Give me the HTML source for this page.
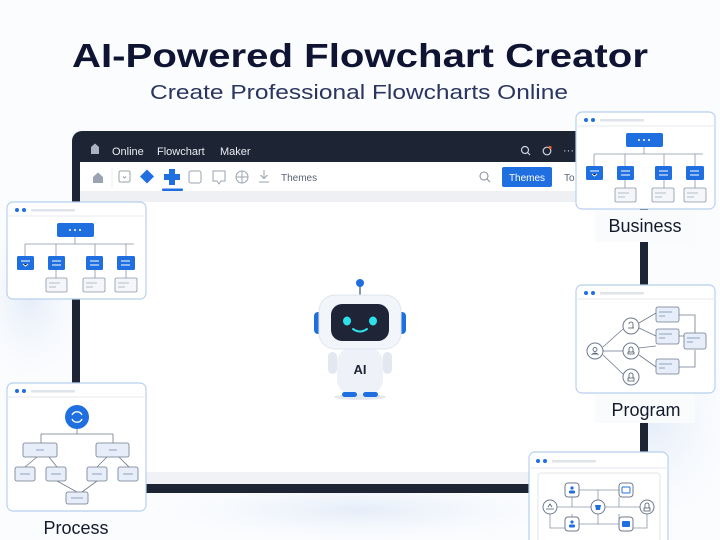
<!DOCTYPE html>
<html><head><meta charset="utf-8"><style>
html,body{margin:0;padding:0;width:720px;height:540px;overflow:hidden;background:#fff}
svg{display:block}
text{font-family:"Liberation Sans",sans-serif}
</style></head><body>
<svg width="720" height="540" viewBox="0 0 720 540" xmlns="http://www.w3.org/2000/svg">
<defs>
<radialGradient id="g1" cx="0.5" cy="0.5" r="0.5"><stop offset="0" stop-color="#e4edf9"/><stop offset="1" stop-color="#fff" stop-opacity="0"/></radialGradient>
<g id="biz">
 <rect x="0" y="0" width="139" height="97" rx="6" fill="#fff" stroke="#b7d0ee" stroke-width="1.2"/>
 <circle cx="10" cy="8" r="2" fill="#1f6fe0"/><circle cx="17" cy="8" r="2" fill="#1f6fe0"/>
 <rect x="24" y="7" width="44" height="2.5" rx="1" fill="#dfe3ea"/>
 <line x1="0" y1="14" x2="139" y2="14" stroke="#e6e9ef"/>
 <rect x="50" y="21" width="37" height="14" rx="2" fill="#1f6fe0"/>
 <circle cx="63" cy="28" r="1" fill="#fff"/><circle cx="68" cy="28" r="1" fill="#fff"/><circle cx="73" cy="28" r="1" fill="#fff"/>
 <path d="M68 35V42M18 42H127M18 42V54M49 42V54M88 42V54M119 42V54M49 68V76M88 68V76M119 68V76" stroke="#8a96a8" stroke-width="0.8" fill="none"/>
 <rect x="10" y="54" width="17" height="14" rx="1.5" fill="#1f6fe0"/>
 <rect x="41" y="54" width="17" height="14" rx="1.5" fill="#1f6fe0"/>
 <rect x="79" y="54" width="17" height="14" rx="1.5" fill="#1f6fe0"/>
 <rect x="110" y="54" width="18" height="14" rx="1.5" fill="#1f6fe0"/>
 <path d="M14 59H23M16 62L18.5 64L21 62M45 59H54M45 63H54M83 59H92M83 63H92M114 59H123M114 63H123" stroke="#fff" stroke-width="1"/>
 <rect x="39" y="76" width="21" height="14" rx="1.5" fill="#f4f6f9" stroke="#8a96a8" stroke-width="0.8"/>
 <rect x="76" y="76" width="22" height="14" rx="1.5" fill="#f4f6f9" stroke="#8a96a8" stroke-width="0.8"/>
 <rect x="108" y="76" width="22" height="14" rx="1.5" fill="#f4f6f9" stroke="#8a96a8" stroke-width="0.8"/>
 <path d="M42 81H53M42 85H49M79 81H90M79 85H86M111 81H122M111 85H118" stroke="#b5bfcc" stroke-width="1"/>
</g>
</defs>
<rect width="720" height="540" fill="#fbfcfe"/>
<ellipse cx="30" cy="300" rx="70" ry="100" fill="url(#g1)"/>
<ellipse cx="650" cy="420" rx="110" ry="130" fill="url(#g1)"/>
<ellipse cx="360" cy="510" rx="260" ry="40" fill="url(#g1)"/>

<text x="72" y="67" font-size="33" font-weight="bold" fill="#0f1433" textLength="576" lengthAdjust="spacingAndGlyphs">AI-Powered Flowchart Creator</text>
<text x="150" y="99" font-size="20.5" fill="#2a3560" textLength="418" lengthAdjust="spacingAndGlyphs">Create Professional Flowcharts Online</text>

<rect x="72" y="131" width="576" height="362" rx="10" fill="#1d2434"/>
<rect x="80" y="162" width="560" height="322" fill="#fff"/>
<rect x="80" y="191" width="560" height="11" fill="#eef0f4"/>
<rect x="80" y="472" width="560" height="12" fill="#f0f2f6"/>
<path d="M91 147L95 143.5L99 147V154H91Z" fill="#aab3c2"/>
<text x="112" y="155" font-size="11" fill="#e8ecf2">Online</text>
<text x="157" y="155" font-size="11" fill="#e8ecf2">Flowchart</text>
<text x="220" y="155" font-size="11" fill="#e8ecf2">Maker</text>
<circle cx="525" cy="150" r="3.5" fill="none" stroke="#cfd5de" stroke-width="1.2"/><line x1="527.5" y1="152.5" x2="530" y2="155" stroke="#cfd5de" stroke-width="1.2"/>
<circle cx="547" cy="151" r="3.8" fill="none" stroke="#cfd5de" stroke-width="1.2"/><circle cx="550" cy="147.5" r="1.6" fill="#f0623a"/>
<text x="563" y="154" font-size="11" fill="#cfd5de">···</text>
<path d="M93 177L98 172.5L103 177V183H93Z" fill="#9aa3b1"/>
<line x1="112" y1="168" x2="112" y2="188" stroke="#eceff3"/>
<rect x="119" y="171" width="11" height="11" rx="1.5" fill="none" stroke="#9aa3b1"/><path d="M123 176.5L124.5 178L126 176.5" stroke="#9aa3b1" fill="none"/>
<path d="M147 169.5L154 176.5L147 183.5L140 176.5Z" fill="#1f6fe0"/>
<path d="M169 169H175V174H180V180H175V185H169V180H164V174H169Z" fill="#1f6fe0"/>
<rect x="162" y="188.5" width="21" height="2.5" rx="1" fill="#1f6fe0"/>
<rect x="189" y="171" width="12" height="12" rx="2" fill="none" stroke="#9aa3b1"/>
<path d="M213 171H225V181H221L219 184L217 181H213Z" fill="none" stroke="#9aa3b1" stroke-linejoin="round"/>
<circle cx="242" cy="177" r="6" fill="none" stroke="#9aa3b1"/><path d="M236 177H248M242 171V183" stroke="#9aa3b1"/>
<path d="M264 170V178M260.5 175L264 178.5L267.5 175M259 182H269" stroke="#9aa3b1" fill="none"/>
<text x="281" y="181" font-size="10" fill="#5a6475">Themes</text>
<circle cx="484" cy="176" r="4" fill="none" stroke="#8a93a2" stroke-width="1.1"/><line x1="487" y1="179" x2="490" y2="182" stroke="#8a93a2" stroke-width="1.1"/>
<rect x="502" y="167" width="50" height="20" rx="2" fill="#1f6fe0"/>
<text x="527" y="181" font-size="10" fill="#fff" text-anchor="middle">Themes</text>
<text x="564" y="181" font-size="10" fill="#5a6475">To</text>

<ellipse cx="360" cy="397" rx="26" ry="3" fill="#e4e9f0"/>
<line x1="360" y1="284" x2="360" y2="296" stroke="#8a96a8" stroke-width="2"/>
<circle cx="360" cy="283" r="4" fill="#1f6fe0"/>
<rect x="314" y="312" width="8" height="22" rx="4" fill="#1f6fe0"/>
<rect x="398" y="312" width="8" height="22" rx="4" fill="#1f6fe0"/>
<rect x="337" y="348" width="46" height="46" rx="14" fill="#eef2f8"/>
<rect x="328" y="352" width="9" height="22" rx="4.5" fill="#e3e8f0"/>
<rect x="383" y="352" width="9" height="22" rx="4.5" fill="#e3e8f0"/>
<text x="360" y="374" font-size="13" font-weight="bold" fill="#1d2434" text-anchor="middle">AI</text>
<rect x="342" y="392" width="15" height="5" rx="2.5" fill="#1f6fe0"/>
<rect x="363" y="392" width="15" height="5" rx="2.5" fill="#1f6fe0"/>
<rect x="319" y="295" width="82" height="54" rx="16" fill="#f2f5fa" stroke="#dfe5ee"/>
<rect x="331" y="304" width="58" height="37" rx="11" fill="#1f2536"/>
<ellipse cx="347" cy="321" rx="4" ry="4.5" fill="#2ee0e8"/>
<ellipse cx="373" cy="321" rx="4" ry="4.5" fill="#2ee0e8"/>
<path d="M353 329Q360 334 367 329" stroke="#2ee0e8" stroke-width="2" fill="none" stroke-linecap="round"/>

<rect x="595" y="210" width="100" height="32" fill="#fafbfd"/>
<rect x="595" y="393" width="100" height="30" fill="#fafbfd"/>

<use href="#biz" x="576" y="112"/>
<use href="#biz" x="7" y="202"/>
<text x="645" y="232" font-size="18" fill="#141a2e" text-anchor="middle">Business</text>

<g transform="translate(576,285)">
 <rect x="0" y="0" width="139" height="108" rx="6" fill="#fff" stroke="#b7d0ee" stroke-width="1.2"/>
 <circle cx="10" cy="8" r="2" fill="#1f6fe0"/><circle cx="17" cy="8" r="2" fill="#1f6fe0"/>
 <rect x="24" y="7" width="44" height="2.5" rx="1" fill="#dfe3ea"/>
 <line x1="0" y1="14" x2="139" y2="14" stroke="#e6e9ef"/>
 <path d="M27 62L47 44M27 66H47M27 70L47 89M63 38L80 28M63 43L80 51M63 63L80 61M63 70L80 82M103 30H119V48M103 51H108M103 82H119V65" stroke="#6f7a8c" stroke-width="0.8" fill="none"/>
 <circle cx="19" cy="66" r="8" fill="#fff" stroke="#6f7a8c"/>
 <circle cx="55" cy="41" r="8" fill="#fff" stroke="#6f7a8c"/>
 <circle cx="55" cy="66" r="8" fill="#fff" stroke="#6f7a8c"/>
 <circle cx="55" cy="92" r="8" fill="#fff" stroke="#6f7a8c"/>
 <path d="M16 69H22M19 62.5A2 2 0 1 1 19 66.5A2 2 0 1 1 19 62.5M15.5 70Q19 66 22.5 70M52 43H58M53 39A2 2 0 0 1 57 39V43M52 67H58V69H52ZM53 67V64A2 2 0 0 1 57 64V67M52 93H58V96H52ZM53 93V90A2 2 0 0 1 57 90V93" stroke="#4a5568" stroke-width="0.8" fill="none"/>
 <rect x="80" y="22" width="23" height="15" rx="2" fill="#e7eef9" stroke="#6f7a8c" stroke-width="0.8"/>
 <rect x="80" y="44" width="23" height="15" rx="2" fill="#e7eef9" stroke="#6f7a8c" stroke-width="0.8"/>
 <rect x="80" y="74" width="23" height="15" rx="2" fill="#e7eef9" stroke="#6f7a8c" stroke-width="0.8"/>
 <rect x="108" y="48" width="22" height="16" rx="2" fill="#e7eef9" stroke="#6f7a8c" stroke-width="0.8"/>
 <path d="M83 27H96M83 31H89M83 49H96M83 53H89M83 79H96M83 83H89M111 53H124M111 57H117" stroke="#8ea2c2" stroke-width="0.9"/>
</g>
<text x="646" y="416" font-size="18" fill="#141a2e" text-anchor="middle">Program</text>

<g transform="translate(7,383)">
 <rect x="0" y="0" width="139" height="128" rx="6" fill="#fff" stroke="#b7d0ee" stroke-width="1.2"/>
 <circle cx="10" cy="8" r="2" fill="#1f6fe0"/><circle cx="17" cy="8" r="2" fill="#1f6fe0"/>
 <rect x="24" y="7" width="44" height="2.5" rx="1" fill="#dfe3ea"/>
 <line x1="0" y1="14" x2="139" y2="14" stroke="#e6e9ef"/>
 <path d="M70 46V51M34 51H106M34 51V60M106 51V60M30 74L18 84M42 74L50 84M100 74L90 84M112 74L122 84M50 98L70 109M90 98L75 109" stroke="#6f7a8c" stroke-width="0.8" fill="none"/>
 <circle cx="70" cy="34" r="12" fill="#1f6fe0"/>
 <path d="M65 32A5.5 5.5 0 0 1 75 32M75 36A5.5 5.5 0 0 1 65 36" stroke="#fff" stroke-width="1.4" fill="none"/>
 <rect x="16" y="60" width="34" height="14" rx="2" fill="#e7eef9" stroke="#6f7a8c" stroke-width="0.8"/>
 <rect x="89" y="60" width="33" height="14" rx="2" fill="#e7eef9" stroke="#6f7a8c" stroke-width="0.8"/>
 <rect x="8" y="84" width="20" height="14" rx="2" fill="#e7eef9" stroke="#6f7a8c" stroke-width="0.8"/>
 <rect x="39" y="84" width="20" height="14" rx="2" fill="#e7eef9" stroke="#6f7a8c" stroke-width="0.8"/>
 <rect x="80" y="84" width="20" height="14" rx="2" fill="#e7eef9" stroke="#6f7a8c" stroke-width="0.8"/>
 <rect x="111" y="84" width="20" height="14" rx="2" fill="#e7eef9" stroke="#6f7a8c" stroke-width="0.8"/>
 <rect x="59" y="109" width="22" height="12" rx="2" fill="#e7eef9" stroke="#6f7a8c" stroke-width="0.8"/>
 <path d="M29 67H37M102 67H110M13 91H23M44 91H54M85 91H95M116 91H126M64 115H76" stroke="#8ea2c2" stroke-width="1"/>
</g>
<text x="76" y="534" font-size="18" fill="#141a2e" text-anchor="middle">Process</text>

<g transform="translate(529,452)">
 <rect x="0" y="0" width="139" height="100" rx="6" fill="#fff" stroke="#b7d0ee" stroke-width="1.2"/>
 <circle cx="9" cy="9" r="2" fill="#1f6fe0"/><circle cx="16" cy="9" r="2" fill="#1f6fe0"/>
 <rect x="23" y="8" width="44" height="2.5" rx="1" fill="#dfe3ea"/>
 <line x1="0" y1="16" x2="139" y2="16" stroke="#e6e9ef"/>
 <rect x="9" y="21" width="122" height="80" rx="3" fill="#fff" stroke="#e0e4ea"/>
 <path d="M50 38H90M28 55H62M76 55H112M43 45V55M90 45V55M69 38V48M69 62V72M43 62V72M90 62V72M50 72H90M21 62V76H36M118 62V76H104" stroke="#8a96a8" stroke-width="0.8" fill="none"/>
 <rect x="36" y="31" width="14" height="14" rx="3" fill="#fff" stroke="#6f7a8c"/>
 <rect x="90" y="31" width="14" height="14" rx="3" fill="#fff" stroke="#6f7a8c"/>
 <rect x="36" y="65" width="14" height="14" rx="3" fill="#fff" stroke="#6f7a8c"/>
 <rect x="90" y="65" width="14" height="14" rx="3" fill="#fff" stroke="#6f7a8c"/>
 <circle cx="21" cy="55" r="7" fill="#fff" stroke="#6f7a8c"/>
 <circle cx="69" cy="55" r="7" fill="#fff" stroke="#6f7a8c"/>
 <circle cx="118" cy="55" r="7" fill="#fff" stroke="#6f7a8c"/>
 <circle cx="43" cy="36" r="1.6" fill="#1f6fe0"/><rect x="40" y="38.5" width="6" height="3" rx="1" fill="#1f6fe0"/>
 <circle cx="43" cy="70" r="1.6" fill="#1f6fe0"/><rect x="40" y="72.5" width="6" height="3" rx="1" fill="#1f6fe0"/>
 <rect x="93" y="35" width="8" height="6" rx="1" fill="none" stroke="#1f6fe0"/>
 <rect x="93" y="69" width="8" height="6" rx="1" fill="#1f6fe0"/>
 <path d="M66 53H72L71 58H67Z" fill="#1f6fe0"/>
 <path d="M115 56H121V59H115ZM116 56V53A2 2 0 0 1 120 53V56" stroke="#4a5568" stroke-width="0.8" fill="none"/>
 <path d="M17 57H25M19 55L21 52L23 55" stroke="#4a5568" stroke-width="0.8" fill="none"/>
</g>
</svg>
</body></html>
